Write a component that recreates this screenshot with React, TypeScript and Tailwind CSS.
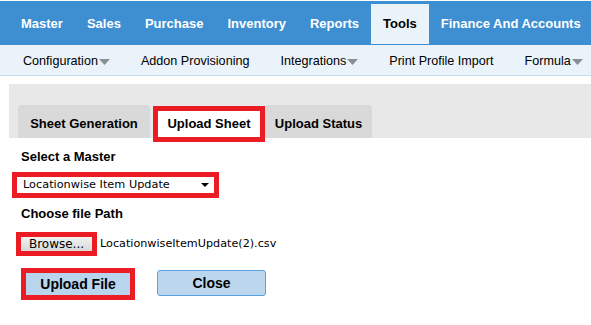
const mainMenu = ['Master', 'Sales', 'Purchase', 'Inventory', 'Reports', 'Tools', 'Finance And Accounts'];

const subMenu = [
  { label: 'Configuration', dropdown: true },
  { label: 'Addon Provisioning', dropdown: false },
  { label: 'Integrations', dropdown: true },
  { label: 'Print Profile Import', dropdown: false },
  { label: 'Formula', dropdown: true },
];

const Caret = () => (
  <svg width="11" height="6" viewBox="0 0 11 6" className="ml-[1px] mt-[2px] shrink-0">
    <path d="M0 0 H11 L5.5 6 Z" fill="#8a8f96" />
  </svg>
);

const App = () => {
  return (
    <div className="w-[591px] h-[325px] bg-white overflow-hidden font-['Liberation_Sans',Arial,sans-serif] text-[13px] text-black">
      {/* top menu */}
      <div className="mt-px h-[44px] bg-[#3d8fd2] flex pt-[3px] pl-[9px] whitespace-nowrap">
        {mainMenu.map((m) => (
          <div
            key={m}
            className={
              m === 'Tools'
                ? 'shrink-0 h-[40px] px-[12px] flex items-center font-bold bg-[#eaf2fa] text-black'
                : 'shrink-0 h-[40px] px-[12px] flex items-center font-bold text-white'
            }
          >
            {m}
          </div>
        ))}
      </div>

      {/* sub menu */}
      <div className="h-[31px] bg-[#eaf2fa] border-b border-[#c6dbee] flex items-center pt-[3px] pl-[23px] gap-[31px] whitespace-nowrap text-[12.6px]">
        {subMenu.map((s) => (
          <div key={s.label} className="shrink-0 flex items-center">
            <span>{s.label}</span>
            {s.dropdown && <Caret />}
          </div>
        ))}
      </div>

      {/* tab strip */}
      <div className="mt-[8px] ml-[9px] h-[54px] bg-[#e8e8e8] pt-[21px] pl-[9px] flex items-start whitespace-nowrap">
        <div className="w-[132px] h-[33px] pt-[4px] flex items-center justify-center font-bold bg-[#d9d9d9] rounded-t-[4px]">
          Sheet Generation
        </div>
        <div className="ml-[3px] mt-px w-[112px] h-[36px] flex items-center justify-center font-bold bg-white border-[5px] border-[#ec1c24]">
          Upload Sheet
        </div>
        <div className="w-[107px] h-[33px] pt-[4px] flex items-center justify-center font-bold bg-[#d9d9d9] rounded-t-[4px]">
          Upload Status
        </div>
      </div>

      {/* form */}
      <div className="pt-[10px] whitespace-nowrap">
        <div className="pl-[21px] h-[18px] leading-[18px] font-bold">Select a Master</div>
        <div className="ml-[12px] mt-[6px] w-[207px] h-[26px] border-[5px] border-[#ec1c24] bg-white flex items-center justify-between pl-[6px] pr-[5px]">
          <span className="font-['DejaVu_Sans',Tahoma,sans-serif] text-[11.3px]">Locationwise Item Update</span>
          <svg width="8" height="4" viewBox="0 0 8 4">
            <path d="M0 0 H8 L4 4 Z" fill="#000" />
          </svg>
        </div>
        <div className="pl-[21px] mt-[7px] h-[18px] leading-[18px] font-bold">Choose file Path</div>
        <div className="ml-[16px] mt-[9px] flex items-center">
          <div className="h-[24px] w-[81px] border-[5px] border-[#ec1c24] bg-gradient-to-b from-[#f2f2f2] to-[#d9d9d9] flex items-center justify-center font-['DejaVu_Sans',Tahoma,sans-serif] text-[12px]">
            Browse...
          </div>
          <span className="ml-[3px] font-['DejaVu_Sans',Tahoma,sans-serif] text-[11.2px]">LocationwiseItemUpdate(2).csv</span>
        </div>
        <div className="mt-[12px] flex items-start">
          <div className="ml-[21px] w-[114px] h-[32px] border-[5px] border-[#ec1c24] bg-[#b9d5ee] flex items-center justify-center font-bold text-[14px]">
            Upload File
          </div>
          <div className="ml-[22px] mt-[2px] w-[109px] h-[26px] border border-[#5aa0dc] rounded-[3px] bg-[#bcd6ee] flex items-center justify-center font-bold text-[14px]">
            Close
          </div>
        </div>
      </div>
    </div>
  );
};

export default App;
